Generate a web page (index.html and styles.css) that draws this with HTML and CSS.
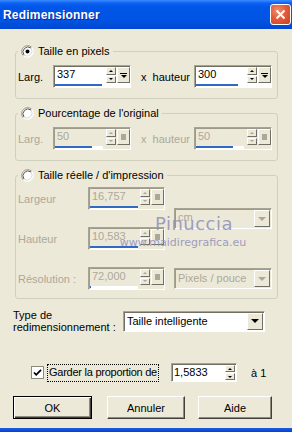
FILE: index.html
```html
<!DOCTYPE html>
<html lang="fr">
<head>
<meta charset="UTF-8">
<title>Redimensionner</title>
<link rel="stylesheet" href="styles.css">
</head>
<body>
<div class="titlebar">
  <span class="title">Redimensionner</span>
  <span class="close"><svg width="11" height="11" viewBox="0 0 11 11"><path d="M1.5 1.5l8 8M9.5 1.5l-8 8" stroke="#fff" stroke-width="2"/></svg></span>
</div>

<fieldset class="group g-pixels">
  <legend>
    <svg class="radio" width="13" height="13" viewBox="0 0 13 13"><circle cx="6.5" cy="6.5" r="5.5" fill="#fff"/><path d="M2.26 10.74A6 6 0 0 1 10.74 2.26" fill="none" stroke="#9d9a8c"/><path d="M3 10A5 5 0 0 1 10 3" fill="none" stroke="#555"/><path d="M2.26 10.74A6 6 0 0 0 10.74 2.26" fill="none" stroke="#fff"/><path d="M3 10A5 5 0 0 0 10 3" fill="none" stroke="#dcd9ca"/><circle cx="6.5" cy="6.5" r="2" fill="#000"/></svg>
    Taille en pixels
  </legend>
  <div class="row">
    <span class="lbl lbl-larg">Larg.</span>
    <div class="num">
      <div class="num-top"><span class="num-val">337</span><span class="spin"><i class="up"></i><i class="dn"></i></span><span class="pop"></span></div>
      <div class="num-bar"><i style="width:47px"></i></div>
    </div>
    <span class="lbl lbl-x">x&nbsp; hauteur</span>
    <div class="num">
      <div class="num-top"><span class="num-val">300</span><span class="spin"><i class="up"></i><i class="dn"></i></span><span class="pop"></span></div>
      <div class="num-bar"><i style="width:42px"></i></div>
    </div>
  </div>
</fieldset>

<fieldset class="group g-percent">
  <legend>
    <svg class="radio" width="13" height="13" viewBox="0 0 13 13"><circle cx="6.5" cy="6.5" r="5.5" fill="#fff"/><path d="M2.26 10.74A6 6 0 0 1 10.74 2.26" fill="none" stroke="#9d9a8c"/><path d="M3 10A5 5 0 0 1 10 3" fill="none" stroke="#555"/><path d="M2.26 10.74A6 6 0 0 0 10.74 2.26" fill="none" stroke="#fff"/><path d="M3 10A5 5 0 0 0 10 3" fill="none" stroke="#dcd9ca"/></svg>
    Pourcentage de l'original
  </legend>
  <div class="row off">
    <span class="lbl lbl-larg">Larg.</span>
    <div class="num">
      <div class="num-top"><span class="num-val">50</span><span class="spin"><i class="up"></i><i class="dn"></i></span><span class="pop"></span></div>
      <div class="num-bar"><i style="width:37px"></i></div>
    </div>
    <span class="lbl lbl-x">x&nbsp; hauteur</span>
    <div class="num">
      <div class="num-top"><span class="num-val">50</span><span class="spin"><i class="up"></i><i class="dn"></i></span><span class="pop"></span></div>
      <div class="num-bar"><i style="width:37px"></i></div>
    </div>
  </div>
</fieldset>

<fieldset class="group g-print">
  <legend>
    <svg class="radio" width="13" height="13" viewBox="0 0 13 13"><circle cx="6.5" cy="6.5" r="5.5" fill="#fff"/><path d="M2.26 10.74A6 6 0 0 1 10.74 2.26" fill="none" stroke="#9d9a8c"/><path d="M3 10A5 5 0 0 1 10 3" fill="none" stroke="#555"/><path d="M2.26 10.74A6 6 0 0 0 10.74 2.26" fill="none" stroke="#fff"/><path d="M3 10A5 5 0 0 0 10 3" fill="none" stroke="#dcd9ca"/></svg>
    Taille réelle / d'impression
  </legend>
  <div class="print-grid off">
    <span class="lbl">Largeur</span>
    <div class="num">
      <div class="num-top"><span class="num-val">16,757</span><span class="spin"><i class="up"></i><i class="dn"></i></span><span class="pop"></span></div>
      <div class="num-bar"><i style="width:48px"></i></div>
    </div>
    <div class="combo combo-unit"><span class="combo-val">cm</span><span class="combo-btn"></span></div>

    <span class="lbl">Hauteur</span>
    <div class="num">
      <div class="num-top"><span class="num-val">10,583</span><span class="spin"><i class="up"></i><i class="dn"></i></span><span class="pop"></span></div>
      <div class="num-bar"><i style="width:48px"></i></div>
    </div>

    <span class="lbl">Résolution :</span>
    <div class="num">
      <div class="num-top"><span class="num-val">72,000</span><span class="spin"><i class="up"></i><i class="dn"></i></span><span class="pop"></span></div>
      <div class="num-bar"><i style="width:1px"></i></div>
    </div>
    <div class="combo combo-res"><span class="combo-val">Pixels / pouce</span><span class="combo-btn"></span></div>
  </div>
</fieldset>

<div class="type-row">
  <span class="type-lbl">Type de<br>redimensionnement :</span>
  <div class="combo combo-type"><span class="combo-val">Taille intelligente</span><span class="combo-btn"></span></div>
</div>

<div class="keep-row">
  <svg class="check" width="13" height="13" viewBox="0 0 13 13"><rect x="0.5" y="0.5" width="12" height="12" fill="#fff" stroke="#8e8b7c"/><path d="M3 6.5l2.2 2.3L10 3.8" fill="none" stroke="#000" stroke-width="1.8"/></svg>
  <span class="focus">Garder la proportion de</span>
  <div class="ratio">
    <span class="ratio-val">1,5833</span>
    <span class="spin"><i class="up"></i><i class="dn"></i></span>
  </div>
  <span class="ratio-to">à 1</span>
</div>

<div class="buttons">
  <button class="btn btn-ok">OK</button>
  <button class="btn btn-cancel">Annuler</button>
  <button class="btn btn-help">Aide</button>
</div>

<div class="frame-bottom"></div>

<div class="watermark">
  <span class="wm-name">Pinuccia</span>
  <span class="wm-url">www.maidiregrafica.eu</span>
</div>
</body>
</html>
```

FILE: styles.css
```css
html {
    margin: 0;
    padding: 0;
}
body {
    margin: 0;
    width: 292px;
    height: 432px;
    overflow: hidden;
    position: relative;
    display: flex;
    flex-direction: column;
    background-color: #ECE9D8;
    font-family: "Liberation Sans", Arial, sans-serif;
    font-size: 11px;
    color: #000;
}

/* title bar */
.titlebar {
    height: 29px;
    flex: none;
    display: flex;
    align-items: center;
    justify-content: space-between;
    padding: 0 1px 0 3px;
    background: linear-gradient(#3A8DFF 0, #0E62F2 3px, #0056E8 7px, #0054E3 70%, #0047D0 100%);
}
.title {
    color: #fff;
    font-weight: bold;
    font-size: 12px;
    text-shadow: 1px 1px 0 #0A2A9A;
    letter-spacing: 0.2px;
}
.close {
    width: 21px;
    height: 21px;
    box-sizing: border-box;
    border: 1px solid #fff;
    border-radius: 3px;
    background: radial-gradient(circle at 35% 30%, #F0906F 0, #E35B3A 45%, #C8411F 100%);
    display: flex;
    align-items: center;
    justify-content: center;
}

/* group boxes */
.group {
    margin: 7px 0 0 15px;
    width: 263px;
    box-sizing: border-box;
    border: 1px solid #D0D0BF;
    border-radius: 3px;
    padding: 7px 0 10px 1px;
    min-width: 0;
}
.g-pixels {
    margin-top: 15px;
    padding-bottom: 10px;
}
.g-print {
    padding-top: 5px;
    padding-bottom: 8px;
}
.group legend {
    display: flex;
    align-items: center;
    gap: 4px;
    height: 14px;
    line-height: 14px;
    padding: 0 3px 0 3px;
    margin-left: 1px;
    font-size: 11px;
}
.radio {
    display: block;
    flex: none;
}

.row {
    display: flex;
    align-items: center;
}
.lbl {
    padding-left: 1px;
    white-space: nowrap;
}
.lbl-larg {
    width: 36px;
    box-sizing: border-box;
}
.lbl-x {
    width: 63px;
    box-sizing: border-box;
    padding-left: 10px;
}
.off .lbl {
    color: #ACA899;
}

/* numeric edit with spin + popup */
.num {
    width: 78px;
    height: 23px;
    box-sizing: border-box;
    flex: none;
    display: flex;
    flex-direction: column;
    border: 1px solid;
    border-color: #A7A491 #fff #fff #A7A491;
    box-shadow: inset 1px 1px 0 #716F64;
    background-color: #fff;
}
.num-top {
    display: flex;
    height: 17px;
    padding: 1px 0 0 1px;
    box-sizing: border-box;
}
.num-val {
    flex: 1;
    padding-left: 2px;
    line-height: 14px;
    font-size: 11px;
}
.spin {
    width: 10px;
    flex: none;
    display: flex;
    flex-direction: column;
    gap: 1px;
    margin-right: 1px;
}
.spin i {
    flex: 1;
    display: flex;
    align-items: center;
    justify-content: center;
    box-sizing: border-box;
    border: 1px solid;
    border-color: #fff #716F64 #716F64 #fff;
    background-color: #ECE9D8;
}
.spin .up::after {
    content: '';
    border-left: 2px solid transparent;
    border-right: 2px solid transparent;
    border-bottom: 2px solid #000;
}
.spin .dn::after {
    content: '';
    border-left: 2px solid transparent;
    border-right: 2px solid transparent;
    border-top: 2px solid #000;
}
.pop {
    width: 13px;
    flex: none;
    box-sizing: border-box;
    border: 1px solid;
    border-color: #fff #716F64 #716F64 #fff;
    background-color: #ECE9D8;
    display: flex;
    flex-direction: column;
    align-items: center;
    justify-content: center;
    gap: 1px;
}
.pop::before {
    content: '';
    width: 7px;
    height: 1px;
    background-color: #000;
}
.pop::after {
    content: '';
    border-left: 3px solid transparent;
    border-right: 3px solid transparent;
    border-top: 3px solid #000;
}
.num-bar {
    width: 48px;
    height: 3px;
    margin: 1px 0 0 1px;
    background-color: #fff;
}
.num-bar i {
    display: block;
    height: 2px;
    background-color: #316AC5;
}

/* disabled edits */
.off .num {
    background-color: #ECE9D8;
    box-shadow: inset 1px 1px 0 #9D9A8C;
}
.off .num-val {
    color: #ACA899;
}
.off .spin .up::after {
    border-bottom-color: #ACA899;
}
.off .spin .dn::after {
    border-top-color: #ACA899;
}
.off .pop::before {
    display: none;
}
.off .pop::after {
    width: 5px;
    height: 6px;
    border: 0;
    background-color: #ACA899;
}

/* print size grid */
.print-grid {
    display: grid;
    grid-template-columns: 62px 77px 98px;
    column-gap: 9px;
    grid-template-rows: 23px 23px 23px;
    row-gap: 17px;
    align-items: center;
}
.print-grid .num {
    width: 77px;
}
.combo-unit {
    grid-column: 3;
    grid-row: 1 / span 2;
}
.combo-res {
    grid-column: 3;
    grid-row: 3;
}

/* combo boxes */
.combo {
    height: 21px;
    box-sizing: border-box;
    display: flex;
    align-items: center;
    border: 1px solid;
    border-color: #A7A491 #fff #fff #A7A491;
    box-shadow: inset 1px 1px 0 #716F64;
    background-color: #fff;
    padding: 1px 1px 1px 3px;
    min-width: 0;
}
.combo-val {
    flex: 1;
    font-size: 11px;
    align-self: flex-start;
    line-height: 17px;
    white-space: nowrap;
}
.combo-btn {
    width: 16px;
    height: 17px;
    flex: none;
    box-sizing: border-box;
    border: 1px solid;
    border-color: #fff #716F64 #716F64 #fff;
    background-color: #ECE9D8;
    display: flex;
    align-items: center;
    justify-content: center;
}
.combo-btn::after {
    content: '';
    border-left: 4px solid transparent;
    border-right: 4px solid transparent;
    border-top: 4px solid #000;
}
.off .combo {
    background-color: #ECE9D8;
    box-shadow: inset 1px 1px 0 #9D9A8C;
}
.off .combo-val {
    color: #ACA899;
}
.off .combo-btn::after {
    border-top-color: #ACA899;
}
.combo-unit .combo-val {
    line-height: 15px;
}

/* resize type */
.type-row {
    display: flex;
    align-items: center;
    margin-top: 10px;
    padding-left: 13px;
}
.type-lbl {
    width: 110px;
    flex: none;
    line-height: 12px;
    font-size: 11px;
    white-space: nowrap;
}
.combo-type {
    width: 142px;
}

/* keep ratio */
.keep-row {
    display: flex;
    align-items: center;
    height: 19px;
    margin-top: 30px;
    padding-left: 31px;
}
.check {
    display: block;
    flex: none;
}
.focus {
    margin-left: 3px;
    padding: 1px 1px 2px 1px;
    border: 1px dotted #000;
    font-size: 11px;
    line-height: 13px;
    letter-spacing: -0.25px;
    white-space: nowrap;
}
.ratio {
    margin-left: 12px;
    width: 66px;
    height: 19px;
    flex: none;
    box-sizing: border-box;
    display: flex;
    border: 1px solid;
    border-color: #A7A491 #fff #fff #A7A491;
    box-shadow: inset 1px 1px 0 #716F64;
    background-color: #fff;
    padding: 1px 1px 1px 2px;
}
.ratio-val {
    flex: 1;
    font-size: 11px;
    line-height: 15px;
}
.ratio .spin {
    margin-right: 0;
}
.ratio-to {
    margin-left: 14px;
    font-size: 11px;
}

/* buttons */
.buttons {
    display: flex;
    margin-top: 14px;
    padding-left: 13px;
}
.btn {
    height: 23px;
    box-sizing: border-box;
    border: 1px solid;
    border-color: #fff #404040 #404040 #fff;
    box-shadow: inset -1px -1px 0 #8E8B7C;
    background-color: #ECE9D8;
    font-family: "Liberation Sans", Arial, sans-serif;
    font-size: 11px;
    color: #000;
    padding: 0;
}
.btn-ok {
    width: 79px;
    border: 1px solid #000;
    box-shadow: inset 1px 1px 0 #fff, inset -1px -1px 0 #404040, inset -2px -2px 0 #8E8B7C;
}
.btn-cancel {
    width: 78px;
    margin-left: 15px;
}
.btn-help {
    width: 74px;
    margin-left: 13px;
}

.frame-bottom {
    margin-top: auto;
    height: 4px;
    flex: none;
    background: linear-gradient(#1C5EE6, #0A3FC8);
}

/* watermark over the dialog */
.watermark {
    position: absolute;
    left: 117px;
    top: 212px;
    width: 132px;
    display: flex;
    flex-direction: column;
    align-items: center;
    color: #9595BB;
    font-family: "DejaVu Sans", sans-serif;
    opacity: 0.9;
}
.wm-name {
    margin-left: 22px;
    font-size: 18px;
    line-height: 24px;
    letter-spacing: 0.5px;
}
.wm-url {
    font-size: 11px;
    line-height: 13px;
}
```
